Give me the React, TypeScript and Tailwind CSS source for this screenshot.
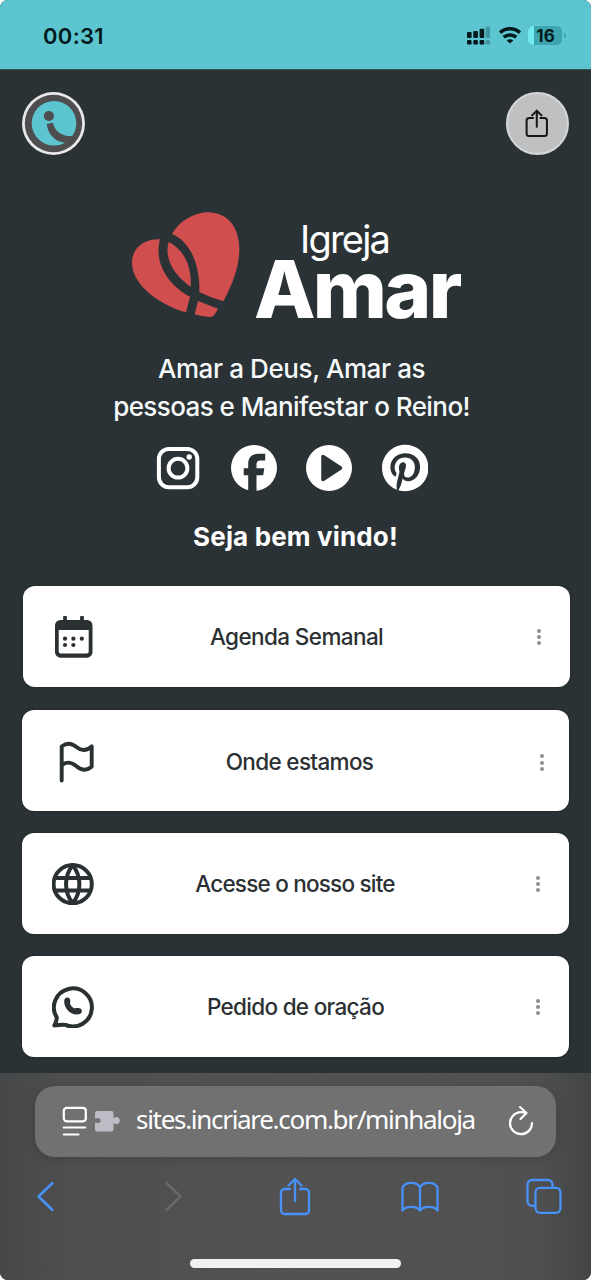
import React from 'react';
import clsx from 'clsx';
import { FaPinterest } from 'react-icons/fa';

interface LinkItem {
  id: string;
  label: string;
  icon: React.ReactNode;
  cardClass: string;
  labelClass: string;
  dotsClass: string;
}

const ShareGlyph: React.FC<{ className: string; strokeWidth: number }> = ({ className, strokeWidth }) => (
  <svg
    viewBox="0 0 40 44"
    className={className}
    fill="none"
    stroke="currentColor"
    strokeWidth={strokeWidth}
    strokeLinecap="round"
    strokeLinejoin="round"
  >
    <path d="M14 15H8.500A3.500 3.500 0 0 0 5 18.500V36.500A3.500 3.500 0 0 0 8.500 40H29.500A3.500 3.500 0 0 0 33 36.500V18.500A3.500 3.500 0 0 0 29.500 15H24" />
    <path d="M19 27V5M12.500 11.500 19 5l6.500 6.500" />
  </svg>
);

const CalendarIcon = () => (
  <svg viewBox="0 0 42 42" className="size-[42px]" fill="currentColor">
    <path
      fillRule="evenodd"
      d="M8.500 4H35a5.500 5.500 0 0 1 5.500 5.500V36.200a5.500 5.500 0 0 1-5.500 5.500H8.500A5.500 5.500 0 0 1 3 36.200V9.500A5.500 5.500 0 0 1 8.500 4ZM6.700 14V35.500a2 2 0 0 0 2 2H34.700a2 2 0 0 0 2-2V14Z"
    />
    <path d="M13 6V1.500M30 6V1.500" stroke="currentColor" strokeWidth="3.800" strokeLinecap="round" />
    <circle cx="13" cy="22.700" r="2.100" />
    <circle cx="21.400" cy="22.700" r="2.100" />
    <circle cx="29.800" cy="22.700" r="2.100" />
    <circle cx="13" cy="29" r="2.100" />
    <circle cx="21.400" cy="29" r="2.100" />
  </svg>
);

const FlagIcon = () => (
  <svg
    viewBox="0 0 42 42"
    className="mt-[3px] size-[42px]"
    fill="none"
    stroke="currentColor"
    strokeWidth="3.900"
    strokeLinecap="round"
    strokeLinejoin="round"
  >
    <path d="M9.700 39.500V5.500C14 2 19.500 1.800 24.500 6S34.500 10.200 39.700 5.300V25.700C34.500 30 29.500 29.500 24.500 25.200S14 20.700 9.700 24.300" />
  </svg>
);

const GlobeIcon = () => (
  <svg viewBox="0 0 42 42" className="size-[42px]" fill="none" stroke="currentColor" strokeWidth="4">
    <circle cx="20.700" cy="21.200" r="19.100" />
    <path d="M20.700 2.100C11.800 13.500 11.800 29 20.700 40.300C29.600 29 29.600 13.500 20.700 2.100ZM3 15H38.400M3 27.400H38.400" />
  </svg>
);

const WhatsappIcon = () => (
  <svg viewBox="0 0 42 42" className="size-[42px]" fill="none" stroke="currentColor" strokeWidth="4" strokeLinejoin="round">
    <path d="M2.300 39.500C3.600 36.700 5.200 34 4.700 31.400A19 19 0 1 1 13.400 38.900C10 38.100 6 39.500 2.300 39.500Z" />
    <path
      d="M15.300 11.500c1.700 0 2.800 1 2.900 2.500c.1 1.300.2 2.500-.2 3.500c.7 2.200 2.300 3.900 4.600 4.900c1.400-.5 3-.4 4.800-.2c1.700.2 2.600 1.400 2.500 3c-.2 2.300-2.500 3.500-5.500 3.300c-6.500-.5-11.900-6-12.200-12.600c-.1-2.700.9-4.400 3.100-4.400Z"
      fill="currentColor"
      stroke="none"
    />
  </svg>
);

const links: LinkItem[] = [
  {
    id: 'agenda',
    label: 'Agenda Semanal',
    icon: <CalendarIcon />,
    cardClass: 'ml-px -mr-px pl-[29px] pr-[28px]',
    labelClass: 'tracking-[-0.600px] pr-[37px] pt-px',
    dotsClass: 'mt-px',
  },
  {
    id: 'local',
    label: 'Onde estamos',
    icon: <FlagIcon />,
    cardClass: 'mt-[23px] pl-[30px] pr-6',
    labelClass: 'tracking-[-0.660px] pr-[34px] pt-[3px]',
    dotsClass: 'mt-1',
  },
  {
    id: 'site',
    label: 'Acesse o nosso site',
    icon: <GlobeIcon />,
    cardClass: 'mt-[22px] pl-[30px] pr-7',
    labelClass: 'tracking-[-0.780px] pr-[39px] pt-px',
    dotsClass: 'mt-px',
  },
  {
    id: 'oracao',
    label: 'Pedido de oração',
    icon: <WhatsappIcon />,
    cardClass: 'mt-[22px] pl-[30px] pr-7',
    labelClass: 'tracking-[-0.690px] pr-[38px] pt-px',
    dotsClass: 'mt-px',
  },
];

const StatusBar = () => (
  <div className="flex h-[69px] shrink-0 items-start justify-between bg-[#5cc5cf] pl-[43px] pr-[25px] pt-[26px] text-[#04191c]">
    <span className="text-[22px] font-semibold leading-5 tracking-[0.3px]">00:31</span>
    <div className="flex items-start">
      <svg viewBox="0 0 24 19" className="mr-[9px] h-[19px] w-6" fill="currentColor">
        <rect x="1" y="6" width="4.600" height="6" rx="1" />
        <rect x="7.300" y="5" width="4.600" height="7" rx="1" />
        <rect x="13.600" y="2.700" width="4.600" height="9.300" rx="1" />
        <rect x="19.600" y="0.700" width="4.400" height="11.300" rx="1" opacity=".28" />
        <rect x="1" y="14" width="4.600" height="4.600" rx="1.200" />
        <rect x="7.300" y="14" width="4.600" height="4.600" rx="1.200" />
        <rect x="13.600" y="14" width="4.600" height="4.600" rx="1.200" />
        <rect x="19.600" y="14" width="4.400" height="4.600" rx="1.200" opacity=".28" />
      </svg>
      <svg viewBox="0 0 22 18" className="mr-[7px] h-[18px] w-[22px]" fill="none" stroke="currentColor" strokeWidth="3.500">
        <path d="M1 6.600C6.800 1.400 15.200 1.400 21 6.600" />
        <path d="M4.700 11.200C8.400 8.100 13.600 8.100 17.300 11.200" />
        <path d="M11 17.500 7.700 14.400C9.700 12.700 12.300 12.700 14.300 14.400Z" fill="currentColor" stroke="none" />
      </svg>
      <div className="flex h-[19px] w-[34px] overflow-hidden rounded-[5px] bg-[#3da5af]">
        <div className="w-1.5 bg-[#70e9ef]" />
        <span className="w-[23px] text-center text-[17px] font-bold leading-5">16</span>
      </div>
      <div className="ml-0.5 mt-[7px] h-[5px] w-[2px] rounded-r-full bg-[#3da5af]" />
    </div>
  </div>
);

const IncriareBadge = () => (
  <svg viewBox="0 0 63 63" className="size-[63px]">
    <circle cx="31.500" cy="31.500" r="31.500" fill="#e9e9ea" />
    <circle cx="31.500" cy="31.500" r="28.700" fill="#4e4d4f" />
    <circle cx="32" cy="31.300" r="22.300" fill="#5cc5cf" />
    <circle cx="26.900" cy="24" r="5.100" fill="#4e4d4f" />
    <path
      d="M24.700 32 31 30.700C32.300 38.700 39.700 45 51 44L55 47.500 43 50.700C33 49.700 26.300 43 24.700 32Z"
      fill="#4e4d4f"
    />
  </svg>
);

const ChurchLogo = () => (
  <div className="flex pl-[132px]">
    <svg viewBox="35 35 324 318" className="h-[106px] w-[108px]" fill="#d04e4e">
      <path d="M155 101C178 60 225 36 263 36C320 36 357 80 357 145C357 195 340 245 309 303C285 295 260 287 237 275C240 205 215 125 155 101Z" />
      <path d="M145 125C185 145 215 190 211 259C165 228 130 178 145 125Z" />
      <path d="M119 117C75 115 35 140 35 187C35 250 110 310 197 336L209 289C145 255 100 190 119 117Z" />
      <path d="M233 302 293 325C285 340 280 350 268 350C252 349 238 346 223 342Z" />
    </svg>
    <div className="ml-[14px] flex flex-col text-white">
      <span className="mt-[7px] pl-[46px] text-[38px] leading-[41px] tracking-[-1.8px]">Igreja</span>
      <span className="text-[80px] font-extrabold leading-[58px] tracking-[-2.7px]">Amar</span>
    </div>
  </div>
);

const SocialRow = () => (
  <div className="flex items-center gap-[29.500px] pl-[155px] text-white">
    <svg viewBox="0 0 46 46" className="size-[46px]" fill="none" stroke="currentColor" strokeWidth="4">
      <rect x="3.900" y="3.900" width="38.400" height="38.400" rx="10" />
      <circle cx="23" cy="23.200" r="9.400" />
      <circle cx="34.200" cy="12" r="2.700" fill="currentColor" stroke="none" />
    </svg>
    <svg viewBox="0 0 46 46" className="size-[46px]">
      <circle cx="23" cy="23" r="23" fill="currentColor" />
      <path
        d="M17.200 46.500V30.200H12.700V23.300H17.200V18.800C17.200 12.300 21 8.800 27 8.800H34.200V15.600H29.500C26.700 15.600 25.500 17 25.500 19.300V23.300H33.300L32.200 30.200H25.500V46.500Z"
        fill="#2b3235"
      />
    </svg>
    <svg viewBox="0 0 46 46" className="size-[46px]">
      <circle cx="23" cy="23" r="23" fill="currentColor" />
      <path d="M17 11.500V34.500L34.500 23Z" fill="#2b3235" stroke="#2b3235" strokeWidth="3.500" strokeLinejoin="round" />
    </svg>
    <FaPinterest className="-my-px h-[48px] w-[46.500px]" />
  </div>
);

const LinkCard: React.FC<{ item: LinkItem }> = ({ item }) => (
  <a className={clsx('flex h-[101px] items-center rounded-xl bg-white text-[#2b3033] shadow-[0_0_3px_#1f2527]', item.cardClass)}>
    {item.icon}
    <span className={clsx('flex-1 text-center text-[22.5px] font-medium', item.labelClass)}>{item.label}</span>
    <span className={clsx('flex w-[6px] flex-col items-center gap-[2.300px]', item.dotsClass)}>
      <i className="size-1 rounded-full bg-[#8d8d8d]" />
      <i className="size-1 rounded-full bg-[#8d8d8d]" />
      <i className="size-1 rounded-full bg-[#8d8d8d]" />
    </span>
  </a>
);

const BrowserBar = () => (
  <div className="flex h-[207px] shrink-0 flex-col bg-[linear-gradient(90deg,#454748_0%,#4f4f4f_12%,#525252_50%,#505050_90%,#434546_100%)] pt-[13px]">
    <div className="mx-[35px] flex h-[71px] items-center rounded-[20px] bg-[#717171] pb-0.5 pl-[27px] pr-[22px] text-white shadow-[0_2px_10px_rgba(0,0,0,0.15)]">
      <svg viewBox="0 0 25 30" className="h-[30px] w-[25px]" fill="none" stroke="currentColor" strokeWidth="2.200" strokeLinecap="round">
        <rect x="1.800" y="1.800" width="22" height="13.500" rx="3" />
        <path d="M1.800 21.500H23.200M1.800 28.500H16.500" />
      </svg>
      <svg viewBox="0 0 26 22" className="ml-[7px] h-[22px] w-[26px]" fill="#bdbbc3">
        <path d="M3 1H17.500a2 2 0 0 1 2 2V8.200c1-.2 1-1.200 2.700-1.200a3.600 3.600 0 0 1 0 7.200c-1.700 0-1.700-1-2.700-1.200V19.500a2 2 0 0 1-2 2H3a2 2 0 0 1-2-2V12.500c.8.200 1.500.6 3 .6a2.500 2.500 0 0 0 0-5c-1.500 0-2.200.4-3 .6V3a2 2 0 0 1 2-2Z" />
      </svg>
      <span className="-mt-[3px] ml-[16px] whitespace-nowrap font-['Noto_Sans',sans-serif] text-[26px] leading-8 tracking-[-1.3px]">
        sites.incriare.com.br/minhaloja
      </span>
      <svg
        viewBox="0 0 26 30"
        className="ml-auto h-[30px] w-[26px]"
        fill="none"
        stroke="currentColor"
        strokeWidth="2.200"
        strokeLinecap="round"
        strokeLinejoin="round"
      >
        <path d="M24 17A11 11 0 1 1 13 6.200C15 6.200 16.500 6.500 18 7" />
        <path d="M12 1 18.500 7 12.500 13" />
      </svg>
    </div>

    <div className="mt-[17px] flex justify-between px-[25px] text-[#4791f8]">
      <svg viewBox="0 0 40 44" className="h-11 w-10" fill="none" stroke="currentColor" strokeWidth="2.500" strokeLinecap="round" strokeLinejoin="round">
        <path d="M27.500 9 13.500 22.500 27.500 36" />
      </svg>
      <svg viewBox="0 0 40 44" className="h-11 w-10 text-[#696969]" fill="none" stroke="currentColor" strokeWidth="2.500" strokeLinecap="round" strokeLinejoin="round">
        <path d="M16.500 9 30.500 22.500 16.500 36" />
      </svg>
      <ShareGlyph className="h-11 w-10" strokeWidth={2.300} />
      <svg viewBox="0 0 40 44" className="h-11 w-10" fill="none" stroke="currentColor" strokeWidth="2.300" strokeLinejoin="round">
        <path d="M19 13.500C16 7.300 4.500 7.300 1.500 13.500V36.500C5 31.700 15.500 31.700 19 36.500C22.500 31.700 33 31.700 36.500 36.500V13.500C33.500 7.300 22 7.300 19 13.500ZM19 13.500V36.500" />
      </svg>
      <svg viewBox="0 0 40 44" className="h-11 w-10" fill="none" stroke="currentColor" strokeWidth="2.300">
        <rect x="9.500" y="13.800" width="25" height="25" rx="4.500" />
        <path d="M9.500 31.800H6A4.500 4.500 0 0 1 1.500 27.300V10.500A4.500 4.500 0 0 1 6 6H22A4.500 4.500 0 0 1 26.500 10.500V13.800" />
      </svg>
    </div>

    <div className="mx-auto mt-[41px] h-[9px] w-[211px] rounded-full bg-[#f1f1f1]" />
  </div>
);

const App: React.FC = () => {
  return (
    <div className="bg-white">
      <div className="flex h-[1280px] w-[591px] flex-col overflow-hidden rounded-[8px] bg-[#2b3235] font-['Inter',sans-serif]">
        <StatusBar />

        <main className="flex flex-1 flex-col border-t border-[#2b5b47]">
          <header className="flex justify-between px-[22px] pt-[21.500px]">
            <IncriareBadge />
            <button className="flex size-[63px] items-center justify-center rounded-full border-2 border-[#d3d5d7] bg-[#bfc0c2] pb-px text-[#161616]">
              <ShareGlyph className="h-[32px] w-[29px]" strokeWidth={2.800} />
            </button>
          </header>

          <section className="mt-[57.500px]">
            <ChurchLogo />
            <p className="mt-[32px] pr-2 text-center text-[26px] font-medium leading-[38px] text-[#f7fafa]">
              <span className="tracking-[-0.400px]">Amar a Deus, Amar as</span>
              <br />
              <span className="tracking-[-0.570px]">pessoas e Manifestar o Reino!</span>
            </p>
            <div className="mt-[19px]">
              <SocialRow />
            </div>
            <h2 className="mt-[27px] text-center text-[26px] font-bold leading-[38px] tracking-[0.15px] text-white">Seja bem vindo!</h2>
          </section>

          <nav className="mt-[30px] px-[22px]">
            {links.map((item) => (
              <LinkCard key={item.id} item={item} />
            ))}
          </nav>
        </main>

        <BrowserBar />
      </div>
    </div>
  );
};

export default App;
